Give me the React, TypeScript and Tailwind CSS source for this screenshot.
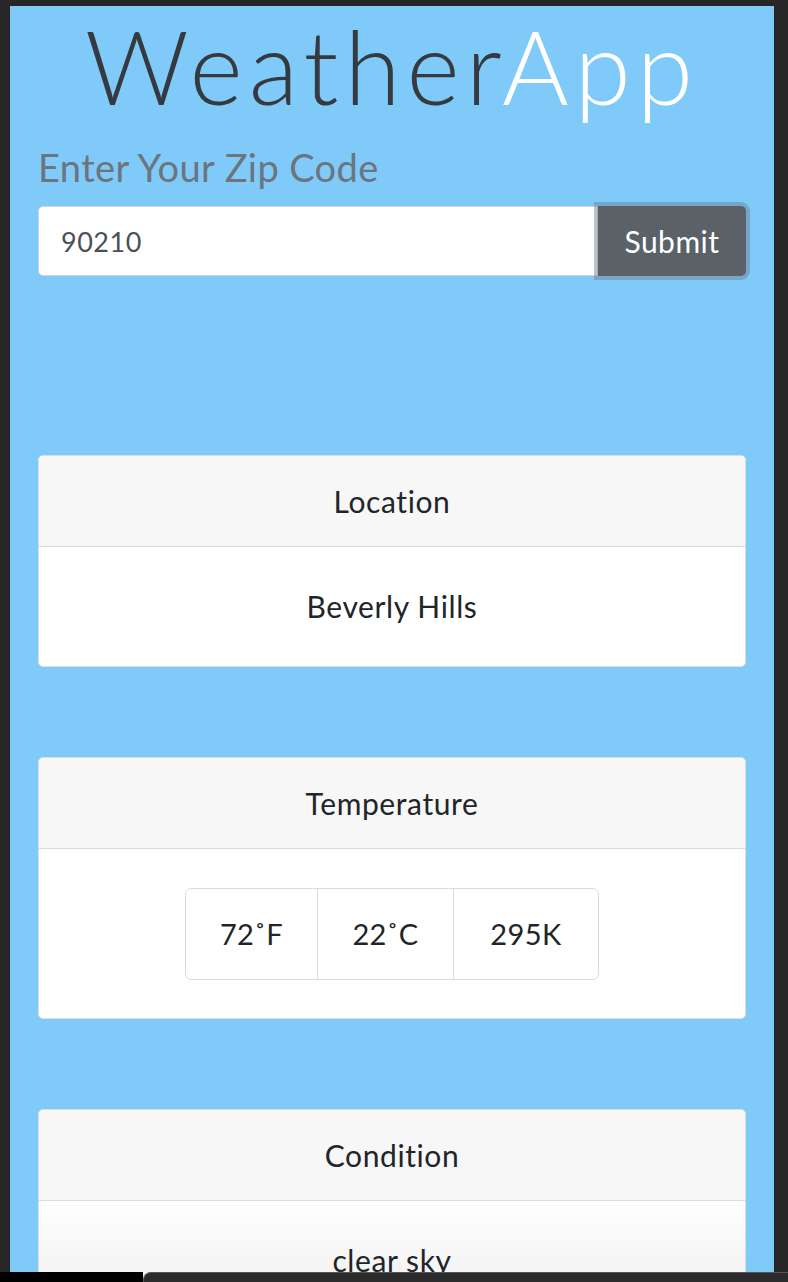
import React from "react";

const font = { fontFamily: "Lato, 'Open Sans', sans-serif" };

function Card({ title, children }: { title: string; children: React.ReactNode }) {
  return (
    <div className="overflow-hidden rounded-[5px] border border-[#dcdcdc] bg-white">
      <div className="flex h-[91px] items-center justify-center border-b border-[#dcdcdc] bg-[#f7f7f7] text-[30px] tracking-[0.6px] text-[#212529]">
        {title}
      </div>
      {children}
    </div>
  );
}

export default function App() {
  return (
    <div className="h-[1282px] overflow-hidden bg-[#262626] pl-[10px] pr-[14px] pt-[6px]" style={font}>
      <div className="flex h-[1266px] flex-col bg-[#7fcaf9] px-[28px]">
        <h1 className="mt-[2px] text-center text-[102px] font-light leading-[116px] tracking-[6px]">
          <span className="text-[#343a40]">Weather</span>
          <span className="text-white">App</span>
        </h1>

        <h3 className="mt-[21px] text-[38px] leading-[44px] tracking-[0.4px] text-[#6c757d]">Enter Your Zip Code</h3>

        <div className="mt-[17px] flex">
          <input
            className="h-[70px] flex-1 rounded-l-[5px] border border-[#ced4da] bg-white px-[22px] text-[27px] tracking-[0.5px] text-[#495057] outline-none"
            defaultValue="90210"
          />
          <button className="h-[70px] w-[148px] rounded-r-[5px] bg-[#5a6268] text-[30px] tracking-[0.5px] text-white shadow-[0_0_0_4px_rgba(110,125,140,0.45)]">
            Submit
          </button>
        </div>

        <div className="mt-[179px] flex flex-col gap-[90px]">
          <Card title="Location">
            <div className="flex h-[119px] items-center justify-center text-[30px] tracking-[0.6px] text-[#212529]">Beverly Hills</div>
          </Card>

          <Card title="Temperature">
            <div className="flex h-[169px] items-center justify-center">
              <div className="flex h-[92px] overflow-hidden rounded-[6px] border border-[#dcdcdc] text-[29px] tracking-[0.4px] text-[#212529]">
                <div className="flex w-[131px] items-center justify-center">72˚F</div>
                <div className="flex w-[136px] items-center justify-center border-l border-[#dcdcdc]">22˚C</div>
                <div className="flex w-[145px] items-center justify-center border-l border-[#dcdcdc]">295K</div>
              </div>
            </div>
          </Card>

          <Card title="Condition">
            <div className="flex h-[119px] items-center justify-center bg-gradient-to-b from-white to-[#ececec] text-[30px] tracking-[0.6px] text-[#212529]">
              clear sky
            </div>
          </Card>
        </div>
      </div>
      <div className="relative -ml-[10px] -mr-[14px] flex h-[10px]">
        <div className="w-[143px] bg-black" />
        <div className="flex-1 rounded-tl-[8px] border-l border-t border-[#555] bg-[#2b2b2b]" />
      </div>
    </div>
  );
}
